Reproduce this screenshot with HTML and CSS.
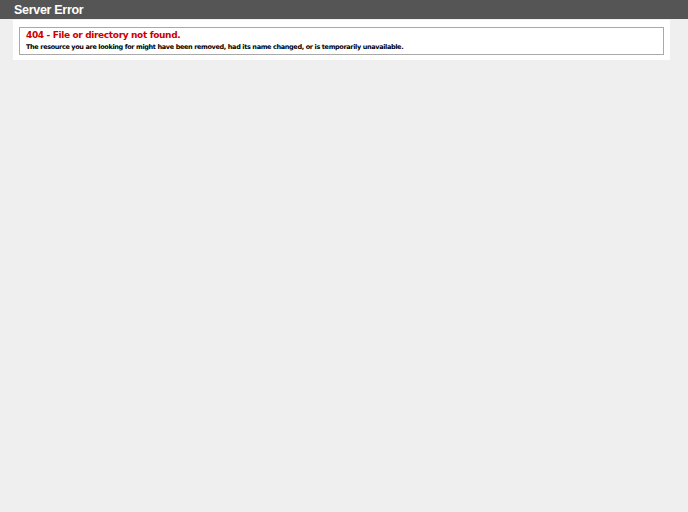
FILE: index.html
```
<!DOCTYPE html>
<html>
<head>
<meta charset="utf-8">
<title>404 - File or directory not found.</title>
<link rel="stylesheet" href="styles.css">
</head>
<body>
<div class="header"><h1 class="title">Server Error</h1></div>
<div class="content">
  <div class="container">
    <div class="fieldset">
      <h2 class="err">404 - File or directory not found.</h2>
      <h3 class="msg">The resource you are looking for might have been removed, had its name changed, or is temporarily unavailable.</h3>
    </div>
  </div>
</div>
</body>
</html>
```
FILE: styles.css
```
html, body { margin: 0; padding: 0; }
body {
  background: #efefef;
  font-family: "DejaVu Sans", Verdana, sans-serif;
}
.header {
  background: #555555;
  height: 19px;
  padding-left: 14px;
  display: flex;
  align-items: center;
}
.title {
  margin: 0;
  color: #ffffff;
  font-family: "Liberation Sans", Arial, sans-serif;
  font-weight: bold;
  font-size: 12.5px;
  letter-spacing: -0.3px;
  line-height: 19px;
  padding-top: 1px;
}
.content {
  padding-left: 13px;
  padding-top: 1px;
}
.container {
  background: #ffffff;
  width: 645px;
  height: 28px;
  padding: 7px 6px 5px 6px;
}
.fieldset {
  border: 1px solid #a9a9a9;
  height: 26px;
  padding: 0 6px;
}
.err {
  margin: 0;
  color: #cc0000;
  font-size: 9px;
  letter-spacing: -0.35px;
  font-weight: bold;
  line-height: 12px;
  padding-top: 1px;
}
.msg {
  margin: 2px 0 0 0;
  color: #000000;
  font-size: 6.5px;
  letter-spacing: -0.36px;
  font-weight: bold;
  line-height: 9px;
}
```
